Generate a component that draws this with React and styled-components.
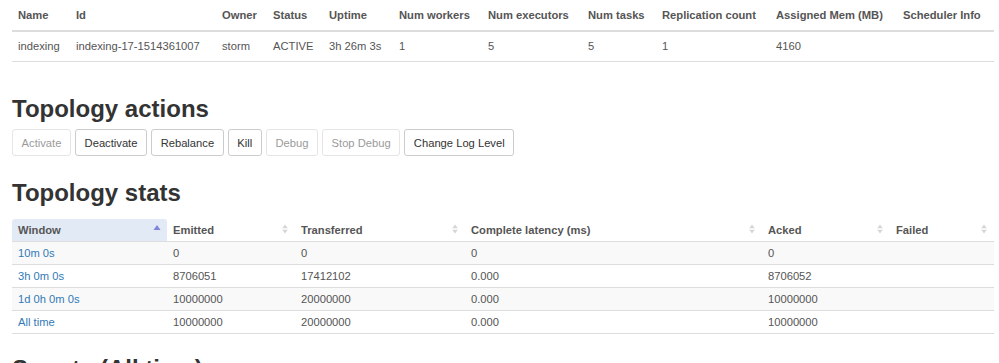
import styled, { createGlobalStyle } from "styled-components";

const GlobalStyle = createGlobalStyle`
  body {
    margin: 0;
    background: #fff;
    font-family: "Liberation Sans", Arial, sans-serif;
    font-size: 11.2px;
    line-height: 16px;
    color: #555;
  }
`;

const Page = styled.div`
  padding: 1px 5px 0 12px;
`;

const Heading = styled.h2`
  margin: ${(props) => props.$top || "0"} 0 ${(props) => props.$bottom || "7px"};
  font-size: 24px;
  line-height: 26.4px;
  font-weight: 700;
  color: #333;
`;

const SummaryTable = styled.table`
  width: 100%;
  border-collapse: collapse;
  table-layout: fixed;
`;

const SummaryHead = styled.th`
  text-align: left;
  font-weight: 700;
  padding: 6.4px 6px;
  border-bottom: 2px solid #ddd;
  white-space: nowrap;
`;

const SummaryCell = styled.td`
  padding: 6.4px 6px;
  border-bottom: 1px solid #ddd;
  white-space: nowrap;
`;

const ActionBar = styled.div`
  display: flex;
  gap: 4px;
`;

const ActionButton = styled.button`
  height: 27.2px;
  padding: 0 8.6px;
  font-family: inherit;
  font-size: 11.2px;
  color: #333;
  background: #fff;
  border: 1px solid #ccc;
  border-radius: 3px;
  opacity: ${(props) => (props.disabled ? 0.5 : 1)};
  cursor: ${(props) => (props.disabled ? "not-allowed" : "pointer")};
`;

const StatsTable = styled.table`
  width: 100%;
  margin-top: 12.6px;
  border-collapse: collapse;
  table-layout: fixed;
`;

const StatsHead = styled.th`
  position: relative;
  text-align: left;
  font-weight: 700;
  padding: 3px 20px 3px 6px;
  border-bottom: 1px solid #ddd;
  background: ${(props) => (props.$sorted ? "#e2ebf5" : "transparent")};
  border-radius: ${(props) => (props.$sorted ? "3px 3px 0 0" : "0")};
`;

const SortMark = styled.svg`
  position: absolute;
  right: 6px;
  top: 4px;
`;

const StatsRow = styled.tr`
  background: ${(props) => (props.$striped ? "#f9f9f9" : "#fff")};
`;

const StatsCell = styled.td`
  padding: 3px 6px;
  border-bottom: 1px solid #ddd;
  white-space: nowrap;
`;

const WindowLink = styled.a`
  color: #337ab7;
  text-decoration: none;
`;

const summaryCols = [
  ["Name", 58],
  ["Id", 146],
  ["Owner", 51],
  ["Status", 56],
  ["Uptime", 70],
  ["Num workers", 89],
  ["Num executors", 100],
  ["Num tasks", 74],
  ["Replication count", 114],
  ["Assigned Mem (MB)", 127],
  ["Scheduler Info", 97],
];

const summaryRow = [
  "indexing",
  "indexing-17-1514361007",
  "storm",
  "ACTIVE",
  "3h 26m 3s",
  "1",
  "5",
  "5",
  "1",
  "4160",
  "",
];

const actions = [
  ["Activate", true],
  ["Deactivate", false],
  ["Rebalance", false],
  ["Kill", false],
  ["Debug", true],
  ["Stop Debug", true],
  ["Change Log Level", false],
];

const statsCols = [
  ["Window", 155],
  ["Emitted", 128],
  ["Transferred", 170],
  ["Complete latency (ms)", 297],
  ["Acked", 128],
  ["Failed", 104],
];

const statsRows = [
  ["10m 0s", "0", "0", "0", "0", ""],
  ["3h 0m 0s", "8706051", "17412102", "0.000", "8706052", ""],
  ["1d 0h 0m 0s", "10000000", "20000000", "0.000", "10000000", ""],
  ["All time", "10000000", "20000000", "0.000", "10000000", ""],
];

const SortIcon = ({ asc }) =>
  asc ? (
    <SortMark width="8" height="12" viewBox="0 0 8 12">
      <path d="M4 2 L7.5 7 L0.5 7 Z" fill="#7f86d8" />
    </SortMark>
  ) : (
    <SortMark width="8" height="12" viewBox="0 0 8 12">
      <path d="M4 1.5 L6.8 5.2 L1.2 5.2 Z" fill="#d6d6d6" />
      <path d="M4 10.5 L6.8 6.8 L1.2 6.8 Z" fill="#d6d6d6" />
    </SortMark>
  );

const App = () => {
  return (
    <Page>
      <GlobalStyle />
      <SummaryTable>
        <colgroup>
          {summaryCols.map(([name, width]) => (
            <col key={name} style={{ width }} />
          ))}
        </colgroup>
        <thead>
          <tr>
            {summaryCols.map(([name]) => (
              <SummaryHead key={name}>{name}</SummaryHead>
            ))}
          </tr>
        </thead>
        <tbody>
          <tr>
            {summaryRow.map((value, i) => (
              <SummaryCell key={i}>{value}</SummaryCell>
            ))}
          </tr>
        </tbody>
      </SummaryTable>

      <Heading $top="34px">Topology actions</Heading>
      <ActionBar>
        {actions.map(([label, disabled]) => (
          <ActionButton key={label} disabled={disabled}>
            {label}
          </ActionButton>
        ))}
      </ActionBar>

      <Heading $top="24px" $bottom="0">
        Topology stats
      </Heading>
      <StatsTable>
        <colgroup>
          {statsCols.map(([name, width]) => (
            <col key={name} style={{ width }} />
          ))}
        </colgroup>
        <thead>
          <tr>
            {statsCols.map(([name], i) => (
              <StatsHead key={name} $sorted={i === 0}>
                {name}
                <SortIcon asc={i === 0} />
              </StatsHead>
            ))}
          </tr>
        </thead>
        <tbody>
          {statsRows.map((row, r) => (
            <StatsRow key={row[0]} $striped={r % 2 === 0}>
              {row.map((value, i) => (
                <StatsCell key={i}>
                  {i === 0 ? <WindowLink href="#">{value}</WindowLink> : value}
                </StatsCell>
              ))}
            </StatsRow>
          ))}
        </tbody>
      </StatsTable>

      <Heading $top="22px">Spouts (All time)</Heading>
    </Page>
  );
};

export default App;
